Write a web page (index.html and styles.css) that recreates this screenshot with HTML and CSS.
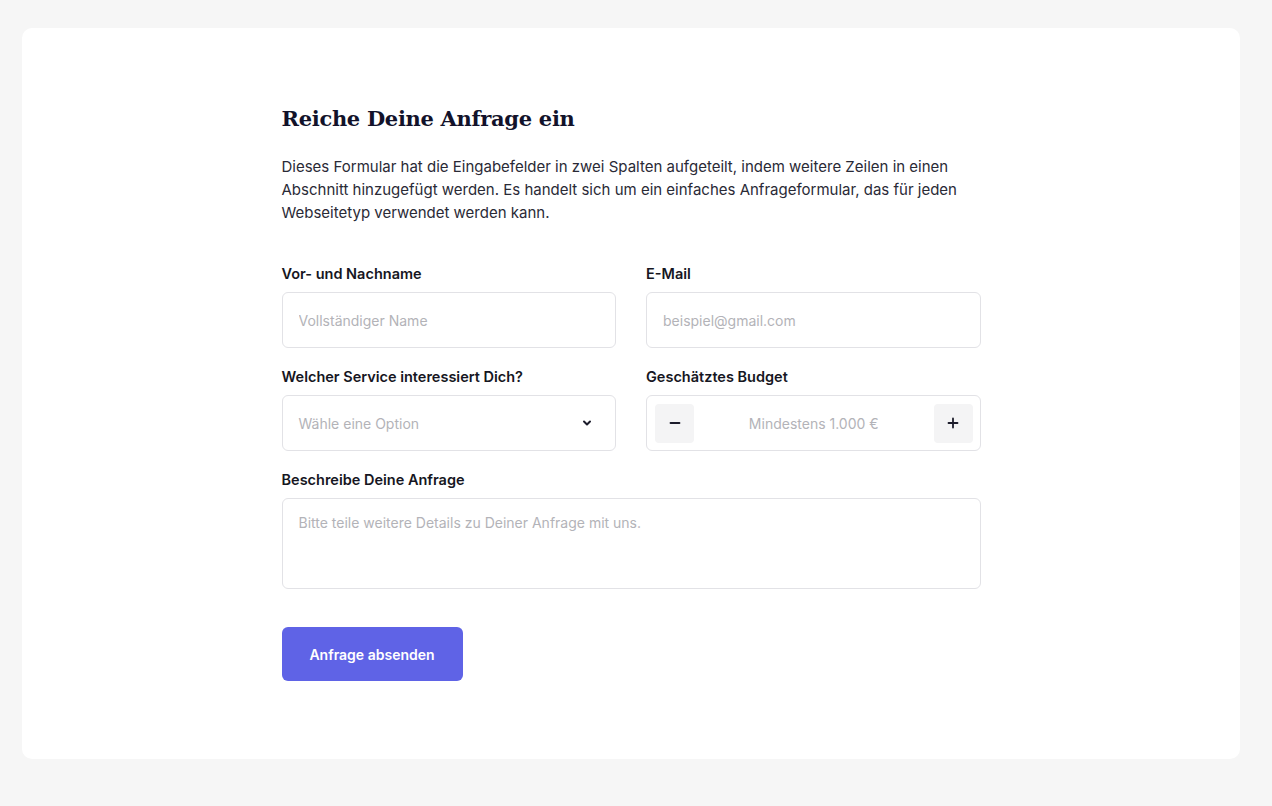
FILE: index.html
```html
<!DOCTYPE html>
<html lang="de">
<head>
    <meta charset="UTF-8">
    <meta name="viewport" content="width=device-width, initial-scale=1.0">
    <title>Anfrage</title>
    <link rel="stylesheet" href="styles.css">
</head>
<body>
    <div class="card">
        <div class="container">
            <h1>Reiche Deine Anfrage ein</h1>
            <p class="intro">Dieses Formular hat die Eingabefelder in zwei Spalten aufgeteilt, indem weitere Zeilen in einen Abschnitt hinzugefügt werden. Es handelt sich um ein einfaches Anfrageformular, das für jeden Webseitetyp verwendet werden kann.</p>

            <form class="form">
                <div class="form-row">
                    <div class="form-group">
                        <label for="name">Vor- und Nachname</label>
                        <input type="text" id="name" placeholder="Vollständiger Name">
                    </div>
                    <div class="form-group">
                        <label for="email">E-Mail</label>
                        <input type="email" id="email" placeholder="beispiel@gmail.com">
                    </div>
                </div>

                <div class="form-row">
                    <div class="form-group">
                        <label for="service">Welcher Service interessiert Dich?</label>
                        <div class="select">
                            <span>Wähle eine Option</span>
                            <svg width="12" height="12" viewBox="0 0 12 12" fill="none" stroke="#1c1c2b" stroke-width="2" stroke-linecap="round" stroke-linejoin="round">
                                <path d="M3 4.5 L6 7.5 L9 4.5"/>
                            </svg>
                        </div>
                    </div>
                    <div class="form-group">
                        <label>Geschätztes Budget</label>
                        <div class="stepper">
                            <button type="button" class="step-btn">
                                <svg width="12" height="12" viewBox="0 0 12 12" stroke="#1c1c2b" stroke-width="1.8" stroke-linecap="round"><path d="M1.5 6 H10.5"/></svg>
                            </button>
                            <span class="step-value">Mindestens 1.000 €</span>
                            <button type="button" class="step-btn">
                                <svg width="12" height="12" viewBox="0 0 12 12" stroke="#1c1c2b" stroke-width="1.8" stroke-linecap="round"><path d="M1.5 6 H10.5 M6 1.5 V10.5"/></svg>
                            </button>
                        </div>
                    </div>
                </div>

                <div class="form-group">
                    <label for="message">Beschreibe Deine Anfrage</label>
                    <textarea id="message" placeholder="Bitte teile weitere Details zu Deiner Anfrage mit uns."></textarea>
                </div>

                <button type="submit" class="submit-btn">Anfrage absenden</button>
            </form>
        </div>
    </div>
</body>
</html>
```

FILE: styles.css
```css
* {
    margin: 0;
    padding: 0;
    box-sizing: border-box;
}

body {
    font-family: Inter, "Noto Sans", sans-serif;
    background-color: #f6f6f6;
    color: #23232f;
    padding: 28px 32px 47px 22px;
}

.card {
    background: #fff;
    border-radius: 10px;
    padding: 75px 20px 78px;
}

.container {
    max-width: 699px;
    margin: 0 auto;
}

h1 {
    font-family: "DejaVu Serif", serif;
    font-size: 21px;
    line-height: 32px;
    font-weight: bold;
    color: #12122a;
    letter-spacing: -0.3px;
    margin-bottom: 20px;
}

.intro {
    font-size: 15px;
    line-height: 23px;
    color: #2a2a36;
    margin-bottom: 40px;
}

.form-row {
    display: grid;
    grid-template-columns: 1fr 1fr;
    gap: 30px;
}

.form-group {
    margin-bottom: 19px;
}

label {
    display: block;
    font-size: 14.5px;
    line-height: 20px;
    font-weight: 600;
    color: #161622;
    margin-bottom: 8px;
}

input, textarea, .select, .stepper {
    width: 100%;
    height: 56px;
    border: 1px solid #e2e2e6;
    border-radius: 6px;
    background: #fff;
    font-family: inherit;
    font-size: 14px;
    color: #23232f;
    padding: 0 16px;
}

input::placeholder, textarea::placeholder {
    color: #b3b3b8;
}

textarea {
    display: block;
    height: 91px;
    padding: 15px 16px;
    resize: none;
}

.select {
    display: flex;
    align-items: center;
    justify-content: space-between;
    color: #b3b3b8;
    padding-right: 22px;
}

.stepper {
    display: flex;
    align-items: center;
    justify-content: space-between;
    padding: 0 7px 0 8px;
}

.step-btn {
    width: 39px;
    height: 39px;
    border: none;
    border-radius: 4px;
    background: #f4f4f5;
    display: flex;
    align-items: center;
    justify-content: center;
    cursor: pointer;
}

.step-value {
    color: #b3b3b8;
    font-size: 14px;
}

.submit-btn {
    margin-top: 19px;
    width: 181px;
    height: 54px;
    border: none;
    border-radius: 6px;
    background-color: #5f63e6;
    color: #fff;
    font-family: inherit;
    font-size: 14px;
    font-weight: 600;
    cursor: pointer;
}

.submit-btn:hover {
    background-color: #4f53d6;
}
```
